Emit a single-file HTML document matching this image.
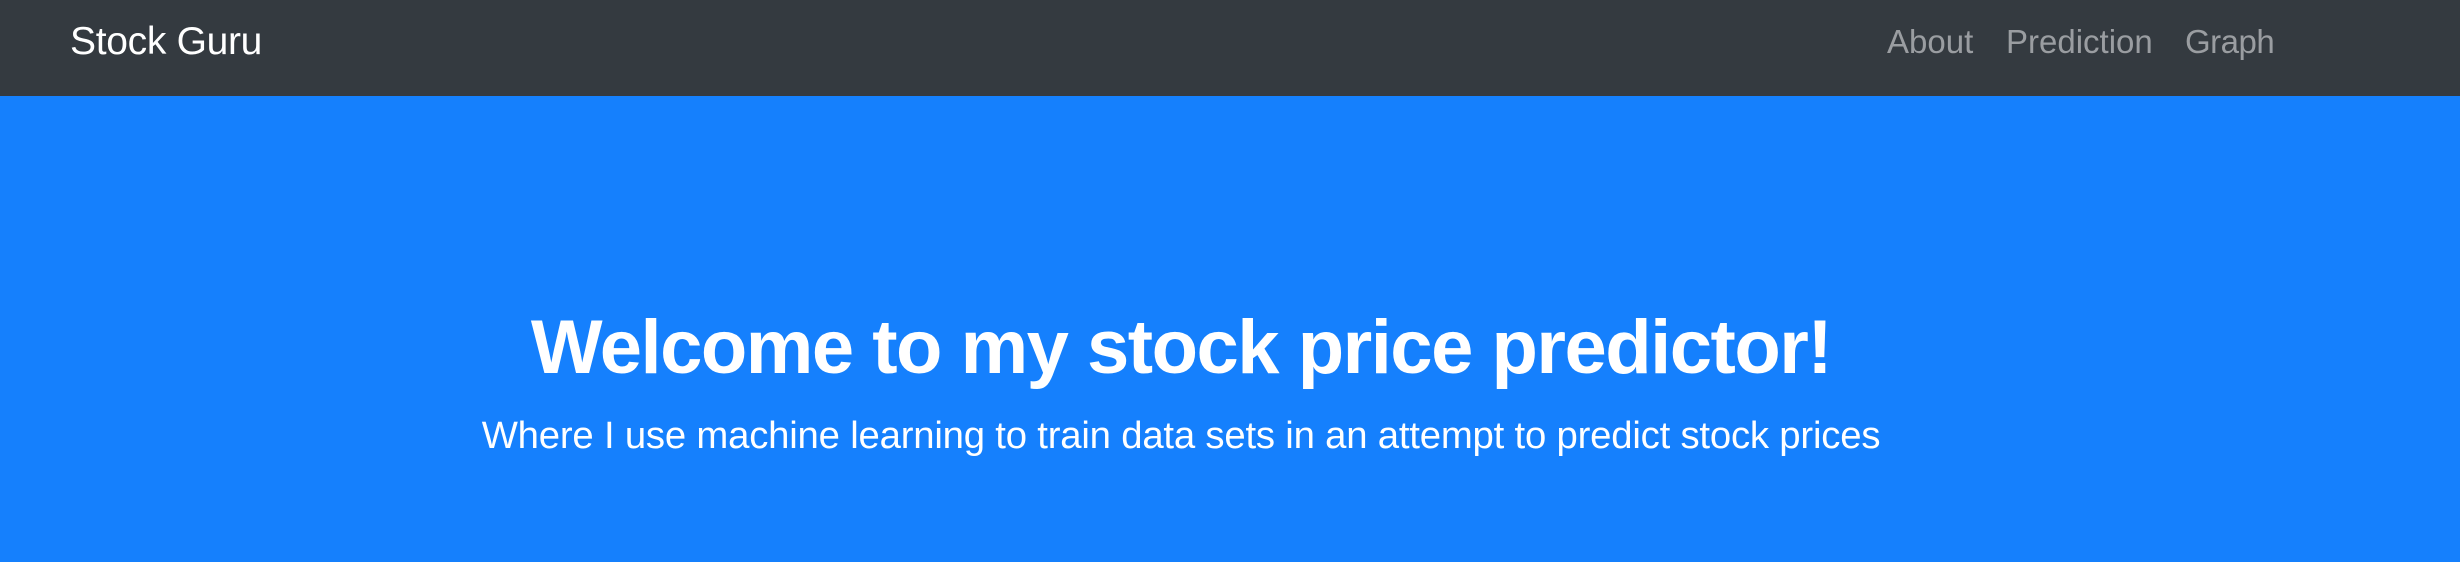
<!DOCTYPE html>
<html><head><meta charset="utf-8"><style>
html,body{margin:0;padding:0;width:2460px;height:562px;overflow:hidden;font-family:"Liberation Sans",sans-serif;}
.nav{position:absolute;left:0;top:0;width:2460px;height:96px;background:#343a40;}
.brand{position:absolute;left:70px;top:20px;font-size:39px;color:#fff;line-height:44px;letter-spacing:-0.3px}
.links a{position:absolute;top:22px;font-size:33px;line-height:40px;color:#9a9da1;text-decoration:none}
.hero{position:absolute;left:0;top:96px;width:2460px;height:466px;background:#1580fd;}
.h1{position:absolute;left:0;width:2362px;top:207px;text-align:center;color:#fff;font-size:76px;line-height:90px;font-weight:bold;letter-spacing:-1.5px}
.sub{position:absolute;left:0;width:2362px;top:317px;text-align:center;color:#fff;font-size:38.3px;line-height:46px;letter-spacing:-0.2px}
</style></head><body>
<div class="nav"><div class="brand">Stock Guru</div>
<div class="links"><a style="left:1887px">About</a><a style="left:2006px">Prediction</a><a style="left:2185px;letter-spacing:-0.5px">Graph</a></div></div>
<div class="hero"><div class="h1">Welcome to my stock price predictor!</div>
<div class="sub">Where I use machine learning to train data sets in an attempt to predict stock prices</div></div>
</body></html>
